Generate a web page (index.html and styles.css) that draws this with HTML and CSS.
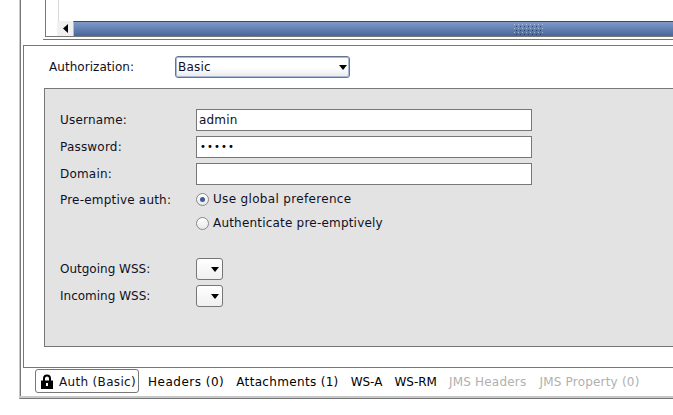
FILE: index.html
```html
<!DOCTYPE html>
<html lang="en">
<head>
<meta charset="utf-8">
<title>Authorization</title>
<link rel="stylesheet" href="styles.css">
</head>
<body>
<div class="window">
  <div class="frame">
    <div class="top">
      <div class="scrollpane">
        <div class="viewport"></div>
        <div class="hscroll">
          <div class="arrow-btn"><svg width="5" height="9" viewBox="0 0 5 9"><path d="M5 0V9L0 4.500Z" fill="#000"/></svg></div>
          <div class="thumb"><svg class="grip" width="30" height="11" viewBox="0 0 30 11"><defs><pattern id="dots" width="4" height="4" patternUnits="userSpaceOnUse"><rect x="0" y="0" width="1" height="1" fill="#a9bcdc"/><rect x="2" y="2" width="1" height="1" fill="#24406f"/></pattern></defs><rect width="30" height="11" fill="url(#dots)"/></svg></div>
        </div>
      </div>
    </div>
    <div class="rule"></div>
    <div class="panel">
      <div class="auth-row">
        <span class="auth-label">Authorization:</span>
        <div class="select"><span>Basic</span><svg width="8" height="5" viewBox="0 0 8 5"><path d="M0 0H8L4 5Z" fill="#000"/></svg></div>
      </div>
      <div class="settings">
        <div class="form">
          <label class="lbl">Username:</label><div class="input">admin</div>
          <label class="lbl">Password:</label><div class="input dots">•••••</div>
          <label class="lbl">Domain:</label><div class="input"></div>
          <label class="lbl pre">Pre-emptive auth:</label>
          <div class="radios">
            <div class="radio-row wide"><span class="radio on"></span>Use global preference</div>
            <div class="radio-row"><span class="radio"></span>Authenticate pre-emptively</div>
          </div>
          <label class="lbl wss">Outgoing WSS:</label><div class="mini"><svg width="8" height="5" viewBox="0 0 8 5"><path d="M0 0H8L4 5Z" fill="#000"/></svg></div>
          <label class="lbl wss">Incoming WSS:</label><div class="mini"><svg width="8" height="5" viewBox="0 0 8 5"><path d="M0 0H8L4 5Z" fill="#000"/></svg></div>
        </div>
      </div>
    </div>
    <div class="tabs">
      <div class="tab active"><svg width="13" height="15" viewBox="0 0 13 15"><path d="M3 7V4.500a3 3 0 0 1 6 0V7" fill="none" stroke="#000" stroke-width="2"/><path d="M0 6.500H12V15H0Z" fill="#000"/><rect x="5" y="9" width="2" height="3" fill="#fff"/></svg><span class="tab-text">Auth (Basic)</span></div>
      <div class="tab t-headers">Headers (0)</div>
      <div class="tab t-attach">Attachments (1)</div>
      <div class="tab t-wsa">WS-A</div>
      <div class="tab t-wsrm">WS-RM</div>
      <div class="tab off t-jmsh">JMS Headers</div>
      <div class="tab off t-jmsp">JMS Property (0)</div>
    </div>
  </div>
</div>
</body>
</html>
```
FILE: styles.css
```css
* { box-sizing: border-box; }
html, body { margin: 0; padding: 0; background: #fff; }
body { font: 12px/15px "DejaVu Sans", sans-serif; color: #101024; letter-spacing: 0.2px; }
.window { width: 673px; height: 415px; overflow: hidden; padding-left: 19px; background: #fff; }
.frame {
  width: 654px; height: 399px;
  border-left: 1px solid #c8c8c8;
  border-bottom: 1px solid #777;
  box-shadow: inset 1px 0 0 #777;
  display: flex; flex-direction: column;
  padding-left: 3px;
  background: #fff;
}
.top { height: 39px; padding-left: 22px; flex: none; }
.scrollpane { height: 37px; border-left: 1px solid #777; border-bottom: 1px solid #777; display: flex; flex-direction: column; padding-left: 12px; }
.viewport { height: 21px; border-left: 1px solid #d8d8d8; flex: none; }
.hscroll { height: 15px; display: flex; background: #f2f2f2; padding-left: 1px; flex: none; margin-left: -1px; }
.arrow-btn { width: 15px; background: #f0f0f0; display: flex; align-items: center; justify-content: center; flex: none; }
.thumb {
  flex: 1;
  border-top: 1px solid #2a4a80;
  border-left: 1px solid #a8bedc;
  background: linear-gradient(#7f9ac8, #49669c);
  display: flex; align-items: center; padding-left: 440px;
}
.rule { height: 1px; margin-left: 20px; background: #777; flex: none; }
.panel { margin-top: 5px; border-top: 1px solid #777; border-left: 1px solid #777; border-bottom: 1px solid #777; height: 323px; flex: none; padding-left: 20px; }
.auth-row { display: flex; align-items: center; height: 22px; margin-top: 10px; margin-left: 5px; }
.auth-label { width: 126px; letter-spacing: 0.05px; }
.select {
  width: 175px; height: 22px; border: 1px solid #66758f; border-radius: 3px;
  box-shadow: inset 0 0 0 1px #a9bbd8;
  background: linear-gradient(#fff 55%, #e9e9ee);
  display: flex; align-items: center; justify-content: space-between; padding: 0 2px 0 2px;
}
.settings { margin-top: 10px; height: 259px; background: #e3e3e3; border: 1px solid #777; border-right: 0; padding: 20px 0 0 15px; }
.form { display: grid; grid-template-columns: 136px 336px; grid-template-rows: 22px 22px 22px 63px 22px 22px; row-gap: 5px; align-items: center; }
.wss { letter-spacing: 0; }
.input { height: 22px; background: #fff; border: 1px solid #777; padding-left: 2px; line-height: 20px; }
.dots { font-size: 10px; letter-spacing: 1.1px; color: #000; padding-left: 3px; }
.pre { align-self: start; margin-top: 3px; }
.radios { display: flex; flex-direction: column; gap: 9px; align-self: start; padding-top: 2px; }
.radio-row { display: flex; align-items: center; gap: 4px; height: 15px; }
.wide { letter-spacing: 0.33px; }
.radio { width: 13px; height: 13px; border-radius: 50%; border: 1px solid #888; background: linear-gradient(#fff, #e8e8e8); display: block; flex: none; position: relative; }
.radio.on::after { content: ""; position: absolute; left: 3px; top: 3px; width: 5px; height: 5px; border-radius: 50%; background: #3f5b94; }
.mini { width: 27px; height: 22px; border: 1px solid #777; border-radius: 3px; background: linear-gradient(#fff, #f0f0f0); display: flex; align-items: center; justify-content: flex-end; padding-right: 3px; }
.tabs { height: 30px; flex: none; display: flex; align-items: center; padding: 0 0 2px 15px; margin-left: -3px; border-bottom: 2px solid #c8c8c8; letter-spacing: 0.33px; }
.tab { white-space: nowrap; color: #000; margin-top: 2px; }
.tab.active { width: 104px; height: 24px; border: 1px solid #777; border-radius: 3px; display: flex; align-items: center; gap: 5px; padding-left: 5px; color: #101024; margin-right: 9px; margin-top: 0; }
.tab-text { margin-top: 2px; }
.t-headers { margin-right: 12px; letter-spacing: 0.5px; }
.t-attach { margin-right: 12px; }
.t-wsa { margin-right: 12px; letter-spacing: 0; }
.t-wsrm { margin-right: 12px; letter-spacing: 0; }
.t-jmsh { margin-right: 13px; letter-spacing: 0.2px; }
.t-jmsp { letter-spacing: 0.2px; }
.off { color: #b0b0b0; }
```
